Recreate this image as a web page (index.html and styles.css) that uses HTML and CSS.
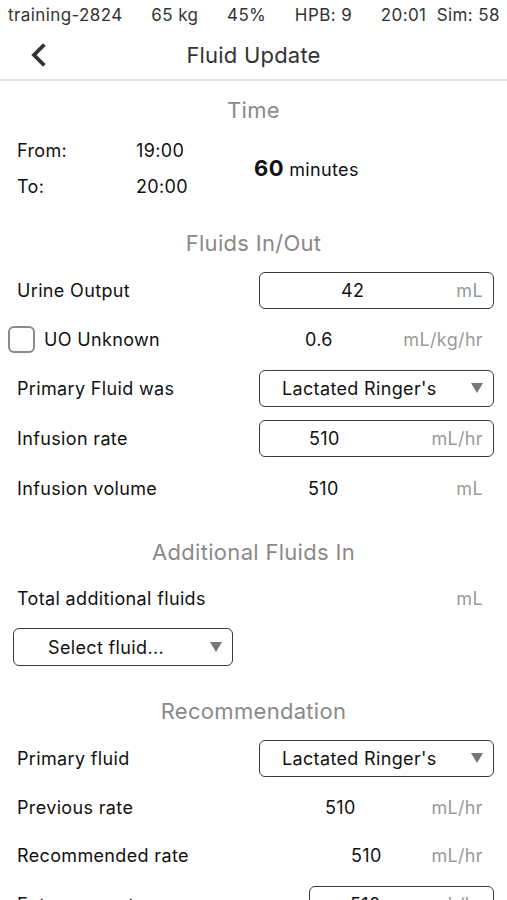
FILE: index.html
```html
<!DOCTYPE html>
<html>
<head>
<meta charset="utf-8">
<link rel="stylesheet" href="styles.css">
</head>
<body>
<div class="status">
  <span>training-2824</span>
  <span>65 kg</span>
  <span>45%</span>
  <span>HPB: 9</span>
  <span>20:01&nbsp; Sim: 58</span>
</div>
<header class="nav">
  <svg class="back" width="20" height="24" viewBox="0 0 20 24"><polyline points="13,3 4,12 13,21" fill="none" stroke="#333" stroke-width="3.8" stroke-linecap="square" stroke-linejoin="miter"/></svg>
  <h1>Fluid Update</h1>
</header>

<main>
  <h2 class="sec first">Time</h2>
  <div class="time">
    <div class="times">
      <span class="tl">From:</span><span>19:00</span>
      <span class="tl">To:</span><span>20:00</span>
    </div>
    <div class="dur"><b>60</b> minutes</div>
  </div>

  <h2 class="sec">Fluids In/Out</h2>
  <div class="row tall">
    <span class="lbl">Urine Output</span>
    <div class="box"><span class="bv p83">42</span><span class="unit">mL</span></div>
  </div>
  <div class="row">
    <label class="lbl chk"><span class="cb"></span>UO Unknown</label>
    <span class="val p46">0.6</span><span class="unit">mL/kg/hr</span>
  </div>
  <div class="row tall">
    <span class="lbl">Primary Fluid was</span>
    <div class="box sel"><span class="bv p24">Lactated Ringer's</span><span class="arrow"></span></div>
  </div>
  <div class="row tall">
    <span class="lbl">Infusion rate</span>
    <div class="box"><span class="bv p50">510</span><span class="unit">mL/hr</span></div>
  </div>
  <div class="row tall">
    <span class="lbl">Infusion volume</span>
    <span class="val p50">510</span><span class="unit">mL</span>
  </div>

  <h2 class="sec">Additional Fluids In</h2>
  <div class="row">
    <span class="lbl">Total additional fluids</span>
    <span class="val"></span><span class="unit">mL</span>
  </div>
  <div class="row tall">
    <div class="box sel small"><span class="bv p35">Select fluid...</span><span class="arrow"></span></div>
  </div>

  <h2 class="sec">Recommendation</h2>
  <div class="row tall">
    <span class="lbl">Primary fluid</span>
    <div class="box sel"><span class="bv p24">Lactated Ringer's</span><span class="arrow"></span></div>
  </div>
  <div class="row">
    <span class="lbl">Previous rate</span>
    <span class="val p67">510</span><span class="unit">mL/hr</span>
  </div>
  <div class="row">
    <span class="lbl">Recommended rate</span>
    <span class="val p93">510</span><span class="unit">mL/hr</span>
  </div>
  <div class="row tall">
    <span class="lbl">Enter new rate</span>
    <div class="box narrow"><span class="bv p41">510</span><span class="unit">mL/hr</span></div>
  </div>
</main>
</body>
</html>
```

FILE: styles.css
```css
* { box-sizing: border-box; }
html, body { margin: 0; padding: 0; background: #fff; }
body {
  font-family: Inter, "Noto Sans", sans-serif;
  color: #111;
  font-size: 18px;
  letter-spacing: 0.35px;
  width: 507px;
  height: 900px;
  overflow: hidden;
}
.status {
  height: 30px;
  display: flex;
  justify-content: space-between;
  align-items: center;
  padding: 0 7px 0 8px;
  font-size: 17px;
  letter-spacing: 0.4px;
  color: #333;
}
.nav {
  height: 51px;
  display: flex;
  align-items: center;
  justify-content: center;
  position: relative;
  border-bottom: 2px solid #e2e2e2;
}
.nav h1 {
  margin: 0;
  font-size: 22px;
  font-weight: 400;
  letter-spacing: 0.2px;
  color: #333;
}
.back { position: absolute; left: 30px; top: 13px; }

.sec {
  margin: 17px 0 0;
  height: 44px;
  line-height: 44px;
  text-align: center;
  font-size: 22px;
  font-weight: 400;
  letter-spacing: 0.3px;
  color: #8a8a8a;
}
.sec.first { margin-top: 7px; }

.time {
  display: flex;
  align-items: center;
  padding-left: 17px;
  height: 72px;
}
.times {
  display: grid;
  grid-template-columns: 119px 118px;
  grid-auto-rows: 36px;
  align-items: center;
}
.dur { font-size: 18px; }
.dur b { font-size: 22px; font-weight: 700; }

.row {
  display: grid;
  grid-template-columns: 242px 1fr auto;
  align-items: center;
  height: 48px;
  padding: 0 13px 0 17px;
}
.row.tall { height: 50px; }
.lbl { white-space: nowrap; }
.unit { color: #9a9a9a; padding-right: 11px; }
.chk { display: flex; align-items: center; margin-left: -9px; }
.cb {
  width: 27px; height: 27px;
  border: 2px solid #8a8a8a;
  border-radius: 6px;
  margin-right: 9px;
}
.box {
  grid-column: 2 / 4;
  height: 37px;
  border: 1.5px solid #3a3a3a;
  border-radius: 6px;
  display: flex;
  align-items: center;
  justify-content: space-between;
}
.box .unit { padding-right: 10px; }
.box.narrow { margin-left: 50px; }
.box.small {
  grid-column: 1 / 2;
  width: 220px;
  margin-left: -4px;
  height: 38px;
}
.bv { white-space: nowrap; }
.arrow {
  width: 0; height: 0;
  border-left: 6.5px solid transparent;
  border-right: 6.5px solid transparent;
  border-top: 10px solid #777;
  margin-right: 10px;
}
.p24 { padding-left: 22px; }
.p35 { padding-left: 34px; }
.p41 { padding-left: 40px; }
.p46 { padding-left: 46px; }
.p50 { padding-left: 49px; }
.p67 { padding-left: 66px; }
.p83 { padding-left: 81px; }
.p93 { padding-left: 92px; }
```
